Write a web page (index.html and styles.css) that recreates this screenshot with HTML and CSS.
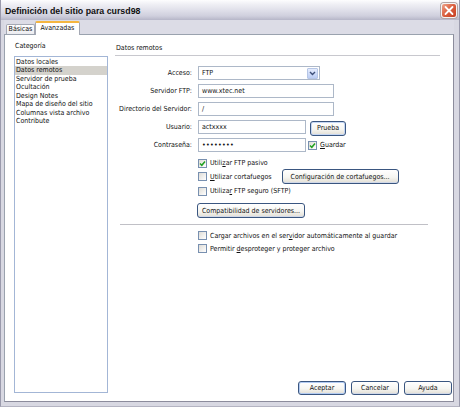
FILE: index.html
```html
<!DOCTYPE html>
<html lang="es">
<head>
<meta charset="utf-8">
<title>Definición del sitio para cursd98</title>
<link rel="stylesheet" href="styles.css">
</head>
<body>
<div class="window">
  <div class="titlebar">
    <span class="title">Definición del sitio para cursd98</span>
    <span class="close"><svg width="14" height="13" viewBox="0 0 14 13"><path d="M3.5 3 L10.5 10 M10.5 3 L3.5 10" stroke="#fff" stroke-width="1.8" stroke-linecap="round"/></svg></span>
  </div>
  <div class="client">
    <div class="tabs">
      <div class="tab">Básicas</div>
      <div class="tab active">Avanzadas</div>
    </div>
    <div class="panel">
      <div class="left">
        <div class="cat-label">Categoría</div>
        <ul class="listbox">
          <li>Datos locales</li>
          <li class="sel">Datos remotos</li>
          <li>Servidor de prueba</li>
          <li>Ocultación</li>
          <li>Design Notes</li>
          <li>Mapa de diseño del sitio</li>
          <li>Columnas vista archivo</li>
          <li>Contribute</li>
        </ul>
      </div>
      <div class="right">
        <div class="heading">Datos remotos</div>
        <div class="form">
          <div class="row first">
            <span class="lbl">Acceso:</span>
            <div class="select"><span class="val">FTP</span><span class="arrow"><svg width="7" height="5" viewBox="0 0 7 5"><path d="M1 1 L3.5 3.5 L6 1" fill="none" stroke="#3d4f78" stroke-width="1.4"/></svg></span></div>
          </div>
          <div class="row">
            <span class="lbl">Servidor FTP:</span>
            <div class="input wide">www.xtec.net</div>
          </div>
          <div class="row">
            <span class="lbl">Directorio del Servidor:</span>
            <div class="input wide">/</div>
          </div>
          <div class="row">
            <span class="lbl">Usuario:</span>
            <div class="input short">actxxxx</div>
            <div class="btn prueba">Prueba</div>
          </div>
          <div class="row">
            <span class="lbl">Contraseña:</span>
            <div class="input short pw">••••••••</div>
            <span class="cb guardar"><svg width="7" height="7" viewBox="0 0 7 7"><path d="M1 3.5 L2.8 5.3 L6 1.5" fill="none" stroke="#21a121" stroke-width="1.5"/></svg></span>
            <span class="cb-text"><u>G</u>uardar</span>
          </div>
        </div>
        <div class="opts">
          <div class="chk-row pasivo">
            <span class="cb"><svg width="7" height="7" viewBox="0 0 7 7"><path d="M1 3.5 L2.8 5.3 L6 1.5" fill="none" stroke="#21a121" stroke-width="1.5"/></svg></span>
            <span class="cb-text">Utili<u>z</u>ar FTP pasivo</span>
          </div>
          <div class="chk-row corta">
            <span class="cb"></span>
            <span class="cb-text"><u>U</u>tilizar cortafuegos</span>
            <div class="btn config">Configuración de cortafuegos...</div>
          </div>
          <div class="chk-row seguro">
            <span class="cb"></span>
            <span class="cb-text">Utiliza<u>r</u> FTP seguro (SFTP)</span>
          </div>
          <div class="btn compat">Compatibilidad de servidores...</div>
        </div>
        <div class="sep"></div>
        <div class="opts lower">
          <div class="chk-row cargar">
            <span class="cb"></span>
            <span class="cb-text">Cargar archivos en el ser<u>v</u>idor automáticamente al guardar</span>
          </div>
          <div class="chk-row permitir">
            <span class="cb"></span>
            <span class="cb-text">Permitir <u>d</u>esproteger y proteger archivo</span>
          </div>
        </div>
        <div class="buttons">
          <div class="btn default">Aceptar</div>
          <div class="btn">Cancelar</div>
          <div class="btn">Ayuda</div>
        </div>
      </div>
    </div>
  </div>
</div>
</body>
</html>
```
FILE: styles.css
```css
* {
  box-sizing: border-box;
  margin: 0;
  padding: 0;
}

html, body {
  width: 460px;
  height: 407px;
  overflow: hidden;
}

body {
  font-family: "DejaVu Sans Condensed", "DejaVu Sans", sans-serif;
  font-size: 7px;
  color: #111;
  background: #e4e4ea;
}

.window {
  width: 460px;
  height: 407px;
  display: flex;
  flex-direction: column;
  background: #d8d8e2;
  border-left: 1px solid #9a9aac;
  border-right: 1px solid #9a9aac;
  border-bottom: 1px solid #b4b4c2;
}

.titlebar {
  height: 20px;
  flex: none;
  display: flex;
  align-items: center;
  justify-content: space-between;
  padding: 0 2px 0 2px;
  background: linear-gradient(#fdfdfe 0%, #f0f0f5 20%, #e0e0ea 50%, #cfcfdd 80%, #b6b6c8 100%);
}

.title {
  font-family: "Liberation Sans", Arial, sans-serif;
  font-weight: bold;
  font-size: 8.8px;
  color: #101010;
  padding-left: 2px;
  padding-top: 1px;
}

.close {
  width: 16px;
  height: 15px;
  border-radius: 3px;
  border: 1px solid #f4f4f4;
  box-shadow: 0 0 0 1px #b4a4a4;
  background: linear-gradient(135deg, #eea58e 0%, #dc6444 45%, #c63c1e 100%);
  display: flex;
  align-items: center;
  justify-content: center;
  margin-top: 1px;
}

.close svg {
  display: block;
}

.client {
  flex: 1;
  display: flex;
  flex-direction: column;
  padding: 0 5px 4px 3px;
}

.tabs {
  height: 14px;
  flex: none;
  display: flex;
  align-items: flex-end;
  padding-left: 2px;
  background: #dcdce6;
}

.tab {
  height: 10px;
  width: 29px;
  border: 1px solid #a4a8b4;
  border-bottom: 0;
  border-radius: 2px 2px 0 0;
  background: linear-gradient(#ffffff, #ececf0);
  line-height: 9px;
  text-align: center;
}

.tab.active {
  width: 45px;
  height: 14px;
  margin-bottom: -1px;
  background: #fff;
  border-top: 2px solid #f5b640;
  line-height: 11px;
  position: relative;
  z-index: 1;
}

.panel {
  flex: 1;
  display: flex;
  gap: 7px;
  background: #fff;
  border: 1px solid #9aa2ae;
  border-right-color: #8c8c9c;
  border-bottom-color: #8c8c9c;
  padding: 7px 0 6px 9px;
}

.left {
  width: 94px;
  flex: none;
  display: flex;
  flex-direction: column;
}

.cat-label {
  height: 9px;
  line-height: 9px;
  padding-left: 1px;
  margin-bottom: 5px;
}

.listbox {
  flex: 1;
  list-style: none;
  border: 1px solid #a3b6d6;
  padding-top: 0.5px;
  margin-bottom: 2px;
}

.listbox li {
  height: 8.5px;
  line-height: 8.5px;
  padding-left: 1px;
  white-space: nowrap;
}

.listbox li.sel {
  background: #d4d2cc;
}

.right {
  width: 338px;
  flex: none;
  display: flex;
  flex-direction: column;
}

.heading {
  width: 325px;
  height: 14px;
  line-height: 9px;
  padding-top: 2px;
  padding-left: 1px;
  border-bottom: 1px solid #c8c8ce;
}

.row {
  height: 14px;
  display: flex;
  align-items: center;
  margin-top: 4px;
}

.row.first {
  margin-top: 10px;
}

.lbl {
  width: 77px;
  margin-right: 6px;
  text-align: right;
  white-space: nowrap;
}

.input, .select {
  height: 14px;
  border: 1px solid #adb8c8;
  background: #fff;
  padding-left: 3px;
  line-height: 12px;
  white-space: nowrap;
}

.select {
  width: 122px;
  display: flex;
  justify-content: space-between;
  align-items: center;
  padding-right: 1px;
}

.arrow {
  width: 11px;
  height: 11px;
  border: 1px solid #b6c6e6;
  border-radius: 1px;
  background: linear-gradient(#e4ecfd, #bccdf4);
  display: flex;
  align-items: center;
  justify-content: center;
}

.arrow svg {
  display: block;
}

.input.wide {
  width: 136px;
}

.input.short {
  width: 108px;
}

.input.pw {
  font-size: 7px;
  letter-spacing: 0.3px;
}

.btn {
  height: 15px;
  border: 1px solid #3a5680;
  border-radius: 3px;
  background: linear-gradient(#ffffff 0%, #f6f6f2 55%, #e2ded4 100%);
  box-shadow: inset 0 -1px 0 #d0d8e8;
  display: flex;
  align-items: center;
  justify-content: center;
  white-space: nowrap;
  flex: none;
}

.btn.prueba {
  width: 36px;
  margin-left: 4px;
  margin-top: 2px;
  box-shadow: inset 0 0 0 1px #c4d6f4;
}

.cb {
  width: 9px;
  height: 9px;
  flex: none;
  border: 1px solid #7890b0;
  background: linear-gradient(135deg, #dedcd6, #ffffff);
  display: flex;
  align-items: center;
  justify-content: center;
}

.cb svg {
  display: block;
}

.cb.guardar {
  margin-left: 2px;
}

.cb-text {
  margin-left: 3px;
  white-space: nowrap;
}

.opts {
  padding-left: 83px;
  display: flex;
  flex-direction: column;
}

.chk-row {
  display: flex;
  align-items: center;
  height: 10px;
}

.chk-row.pasivo {
  margin-top: 6px;
}

.chk-row.corta {
  height: 15px;
  margin-top: 1px;
}

.chk-row.seguro {
  margin-top: 2px;
}

.btn.config {
  width: 117px;
  margin-left: 10px;
}

.btn.compat {
  width: 108px;
  margin-top: 7px;
  margin-left: -1px;
}

.sep {
  width: 308px;
  height: 1px;
  margin-left: 5px;
  margin-top: 6px;
  background: #c0c0c6;
  flex: none;
}

.opts.lower .chk-row {
  height: 9px;
}

.chk-row.cargar {
  margin-top: 6px;
}

.chk-row.permitir {
  margin-top: 4px;
}

.buttons {
  margin-top: auto;
  display: flex;
  justify-content: flex-end;
  gap: 5px;
  padding-right: 1px;
}

.buttons .btn {
  width: 48px;
  height: 14px;
}

.btn.default {
  box-shadow: inset 0 0 0 1px #b2cbf2;
}
```
